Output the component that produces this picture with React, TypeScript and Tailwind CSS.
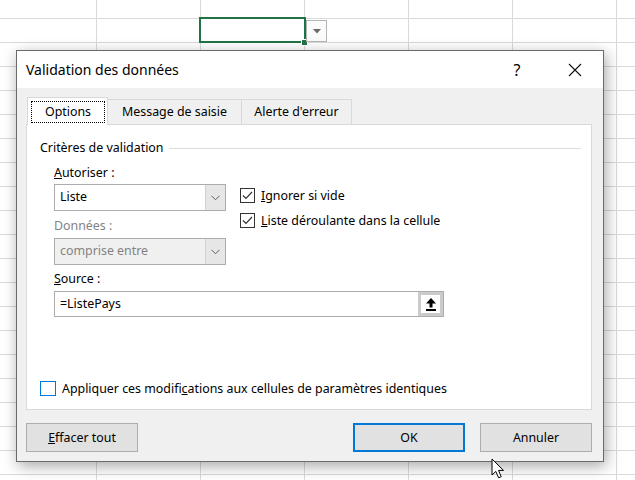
import React from "react"

const ui = "font-['Noto_Sans','Liberation_Sans',sans-serif]"

function Chevron() {
  return (
    <svg width="9" height="6" viewBox="0 0 9 6">
      <path d="M0.5 0.8 L4.5 4.8 L8.5 0.8" fill="none" stroke="#606060" strokeWidth="1" />
    </svg>
  )
}

function CheckBox({ checked }: { checked: boolean }) {
  return (
    <div className="w-[15px] h-[15px] border border-[#333] bg-white flex items-center justify-center flex-shrink-0">
      {checked && (
        <svg width="13" height="13" viewBox="0 0 13 13">
          <path d="M2 6.5 L5 9.5 L11 3" fill="none" stroke="#333" strokeWidth="1.2" />
        </svg>
      )}
    </div>
  )
}

function Select({ value, disabled }: { value: string; disabled?: boolean }) {
  return (
    <div
      className={`flex h-[27px] border border-[#acacac] ${
        disabled ? "bg-[#f0f0f0] text-[#838383]" : "bg-white text-black"
      }`}
    >
      <div className="flex-1 flex items-center pl-[5px]">{value}</div>
      <div className="w-[20px] flex items-center justify-center bg-[#e6e6e6] border-l border-[#d0d0d0]">
        <Chevron />
      </div>
    </div>
  )
}

function UploadIcon() {
  return (
    <svg width="12" height="15" viewBox="0 0 12 15">
      <polygon points="6,1 1,6.5 4.5,6.5 4.5,10.5 7.5,10.5 7.5,6.5 11,6.5" fill="#000" />
      <rect x="1" y="12" width="10" height="2" fill="#000" />
    </svg>
  )
}

function Cursor() {
  return (
    <svg width="14" height="22" viewBox="0 0 14 22" className="absolute left-[491px] top-[458px]">
      <path
        d="M1 1 L1 17 L4.8 13.4 L7.6 19.8 L10.2 18.7 L7.5 12.4 L12.5 12.4 Z"
        fill="#fff"
        stroke="#000"
        strokeWidth="1"
        strokeLinejoin="round"
      />
    </svg>
  )
}

export default function App() {
  return (
    <div
      className={`relative w-[635px] h-[480px] overflow-hidden bg-white bg-[linear-gradient(to_right,#dadada_1px,transparent_1px),linear-gradient(to_bottom,#dadada_1px,transparent_1px)] bg-[size:104px_24px] bg-[position:96px_18px] text-[12.4px] ${ui}`}
    >
      {/* selected cell with list arrow */}
      <div className="absolute left-[199px] top-[17px] w-[107px] h-[26px] border-2 border-[#217346] bg-white" />
      <div className="absolute left-[301px] top-[39px] w-[7px] h-[7px] bg-[#217346] border border-white" />
      <div className="absolute left-[306px] top-[20px] w-[21px] h-[22px] border border-[#b4b4b4] bg-[#fbfbfb] flex items-center justify-center">
        <svg width="8" height="5" viewBox="0 0 8 5">
          <polygon points="0,0 8,0 4,4.5" fill="#6a6a6a" />
        </svg>
      </div>

      {/* dialog */}
      <div className="absolute left-[16px] top-[50px] w-[588px] h-[412px] border border-[#6a6a6a] bg-[#f0f0f0] flex flex-col shadow-[2px_4px_14px_rgba(0,0,0,0.35)]">
        <div className="h-[37px] bg-white flex items-center pl-[9px] text-[14px] text-black">
          <span className="flex-1">Validation des données</span>
          <span className="w-[20px] text-center mr-[41px] text-[16px]">?</span>
          <svg width="14" height="14" viewBox="0 0 14 14" className="mr-[21px]">
            <path d="M1 1 L13 13 M13 1 L1 13" stroke="#111" strokeWidth="1.1" />
          </svg>
        </div>

        <div className="flex-1 flex flex-col pl-[9px] pr-[11px] pt-[9px] pb-[9px]">
          {/* tabs */}
          <div className="flex items-end h-[27px] pl-px">
            <div className="relative z-10 w-[81px] h-[28px] -mb-px bg-white border-x border-t border-[#d9d9d9] pl-[3px] pr-[2px] pt-[3px] pb-[2px]">
              <div className="h-full border border-dotted border-black flex items-center justify-center">Options</div>
            </div>
            <div className="w-[134px] h-[25px] border-t border-r border-[#d9d9d9] flex items-center justify-center">
              Message de saisie
            </div>
            <div className="w-[110px] h-[25px] border-t border-r border-[#d9d9d9] flex items-center justify-center">
              Alerte d'erreur
            </div>
          </div>

          {/* panel */}
          <div className="flex-1 border border-[#d9d9d9] bg-white flex flex-col pl-[13px] pr-[10px] pt-[15px] pb-[10px] text-black">
            <div className="flex items-center h-4 gap-[5px]">
              <span>Critères de validation</span>
              <div className="flex-1 h-px bg-[#dcdcdc]" />
            </div>

            <div className="pl-[14px] mt-[8px]">
              <div className="flex">
                <div className="w-[172px]">
                  <div className="h-4 leading-4 mb-[4px] pt-px">
                    <u>A</u>utoriser :
                  </div>
                  <Select value="Liste" />
                  <div className="h-4 leading-4 mt-[6px] mb-[5px] pt-px text-[#838383]">Données :</div>
                  <Select value="comprise entre" disabled />
                </div>
                <div className="ml-[14px] mt-[24px] flex flex-col gap-[10px]">
                  <div className="flex items-center gap-[6px] h-[15px]">
                    <CheckBox checked />
                    <span className="pt-[2px]">
                      <u>I</u>gnorer si vide
                    </span>
                  </div>
                  <div className="flex items-center gap-[6px] h-[15px]">
                    <CheckBox checked />
                    <span className="pt-[2px]">
                      <u>L</u>iste déroulante dans la cellule
                    </span>
                  </div>
                </div>
              </div>

              <div className="h-4 leading-4 mt-[5px] mb-[5px] pt-px">
                <u>S</u>ource :
              </div>
              <div className="w-[390px] h-[26px] border border-[#acacac] flex bg-white">
                <div className="flex-1 flex items-center pl-[5px]">=ListePays</div>
                <div className="w-[25px] border-[3px] border-[#cbcbcb] flex items-center justify-center bg-white">
                  <UploadIcon />
                </div>
              </div>
            </div>

            <div className="mt-auto flex items-center gap-[6px]">
              <div className="w-[16px] h-[15px] border border-[#0078d7] bg-white flex-shrink-0" />
              <span className="pt-[2px]">
                Appliquer ces modifi<u>c</u>ations aux cellules de paramètres identiques
              </span>
            </div>
          </div>

          {/* buttons */}
          <div className="flex mt-[13px] h-[29px] text-black">
            <button className="w-[112px] h-full bg-[#e1e1e1] border border-[#adadad] pt-px">
              <u>E</u>ffacer tout
            </button>
            <div className="flex-1" />
            <button className="w-[112px] h-full bg-[#e1e1e1] border-2 border-[#0078d7] pt-px">OK</button>
            <button className="w-[112px] h-full ml-[15px] bg-[#e1e1e1] border border-[#adadad] pt-px">Annuler</button>
          </div>
        </div>
      </div>

      <Cursor />
    </div>
  )
}
